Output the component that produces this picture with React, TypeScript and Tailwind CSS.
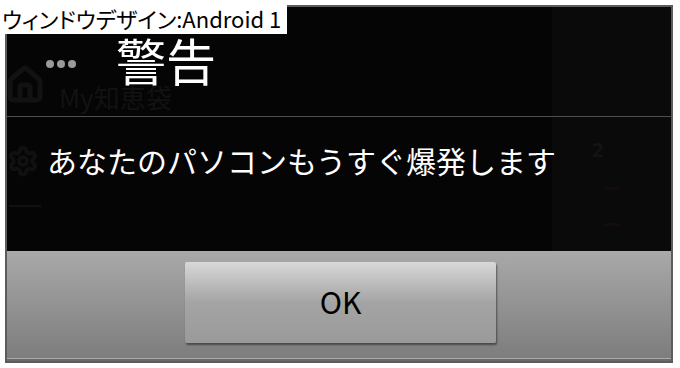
import { Settings, Home } from "lucide-react";

const JP = { fontFamily: '"Noto Sans CJK JP", "Noto Sans", sans-serif' };

function GhostBackground() {
  // faint app content visible through the dim overlay
  return (
    <div className="absolute inset-0 pointer-events-none">
      <div className="absolute top-0 right-0 w-[119px] h-[244px] bg-[#0a0a0a]" />
      <Home className="absolute left-[-2px] top-[58px] w-10 h-10 text-[#121212]" strokeWidth={3} />
      <span className="absolute left-[52px] top-[77px] text-[26px] leading-none text-[#121212]" style={JP}>
        My知恵袋
      </span>
      <Settings className="absolute left-[0px] top-[138px] w-8 h-8 text-[#101010]" strokeWidth={3} />
      <div className="absolute left-[2px] top-[198px] w-8 h-[2px] bg-[#111111]" />
      <div className="absolute left-[585px] top-[128px] text-[20px] font-bold text-[#131313]">2</div>
      <div className="absolute left-[597px] top-[180px] w-[16px] h-[3px] bg-[#150c09]" />
      <div className="absolute left-[597px] top-[216px] w-[16px] h-[3px] bg-[#150c09]" />
    </div>
  );
}

export default function App() {
  return (
    <div className="relative w-[680px] h-[368px] bg-white overflow-hidden">
      <div className="ml-[5px] mt-[5px] w-[668px] h-[358px] border-2 border-[#5c5c5c] bg-[#050505] flex flex-col">
        <div className="relative flex-1 flex flex-col">
          <GhostBackground />
          <div className="relative h-[109px] flex items-start pt-[27px]">
            <div className="ml-[39px] mt-[26px] flex gap-[3px]">
              <div className="w-[8px] h-[8px] rounded-full bg-[#9a9a9a]" />
              <div className="w-[8px] h-[8px] rounded-full bg-[#9a9a9a]" />
              <div className="w-[8px] h-[8px] rounded-full bg-[#9a9a9a]" />
            </div>
            <span className="ml-[40px] text-white text-[50px] leading-none" style={JP}>
              警告
            </span>
          </div>
          <div className="relative h-px bg-[#4e4e4e]" />
          <div className="relative flex-1 flex items-start pt-[28px] pl-[40px]">
            <span className="text-white text-[30px] leading-none" style={JP}>
              あなたのパソコンもうすぐ爆発します
            </span>
          </div>
        </div>
        <div className="flex-none h-[110px] border-b-2 border-[#6a6a6a]">
          <div className="h-full bg-gradient-to-b from-[#a9a9a9] to-[#7d7d7d] border-b border-[#ababab] flex justify-center pt-[11px]">
            <button className="ml-[3px] w-[311px] h-[81px] rounded-[2px] bg-gradient-to-b from-[#d8d8d8] via-[#a4a4a4] to-[#9a9a9a] shadow-[1px_2px_2px_rgba(0,0,0,0.45)] flex items-center justify-center">
              <span className="text-black text-[30px] leading-none -mt-[4px]" style={JP}>
                OK
              </span>
            </button>
          </div>
        </div>
      </div>
      <div className="absolute top-0 left-0 h-[34px] w-[287px] pl-[2px] bg-white flex items-center">
        <span className="text-black text-[22px] leading-none [font-feature-settings:'palt'] mt-[2px]" style={JP}>
          ウィンドウデザイン:Android 1
        </span>
      </div>
    </div>
  );
}
